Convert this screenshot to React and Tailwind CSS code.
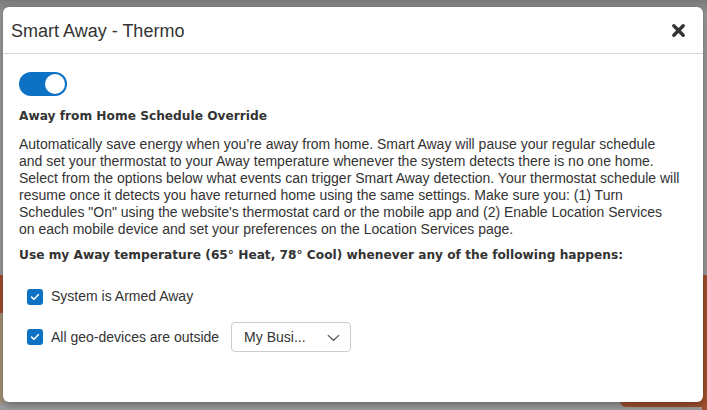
import React from 'react'

const Check = () => (
  <span className="flex items-center justify-center w-4 h-4 rounded-[3px] bg-[#0e72c4] shrink-0">
    <svg viewBox="0 0 16 16" className="w-3 h-3">
      <path d="M3.5 8.2 L6.6 11 L12.5 5" fill="none" stroke="#fff" strokeWidth="2.2" strokeLinecap="round" strokeLinejoin="round" />
    </svg>
  </span>
)

const lines = [
  'Automatically save energy when you’re away from home. Smart Away will pause your regular schedule',
  'and set your thermostat to your Away temperature whenever the system detects there is no one home.',
  'Select from the options below what events can trigger Smart Away detection. Your thermostat schedule will',
  'resume once it detects you have returned home using the same settings. Make sure you: (1) Turn',
  'Schedules "On" using the website\'s thermostat card or the mobile app and (2) Enable Location Services',
  'on each mobile device and set your preferences on the Location Services page.',
]

export default function App() {
  return (
    <div className="relative w-[707px] h-[410px] overflow-hidden bg-[#9c9c9c] font-['Liberation_Sans',Arial,sans-serif]">
      {/* dimmed page behind the modal */}
      <div className="absolute inset-x-0 top-0 h-4 bg-gradient-to-b from-[#7a7a7a] to-[#9c9c9c]" />
      <div className="absolute left-0 top-[275px] w-[4px] h-[38px] bg-[#a4502f]" />
      <div className="absolute left-0 top-[313px] w-[4px] h-[90px] bg-[#a59478]" />
      <div className="absolute right-0 top-[275px] w-[5px] h-[135px] bg-[#a4502f]" />
      <div className="absolute left-[620px] bottom-[3px] w-[87px] h-[10px] bg-[#a4502f] rounded-bl-md" />

      {/* modal */}
      <div className="absolute left-[3px] top-[7px] w-[700px] h-[395px] bg-white rounded-[6px] shadow-[0_3px_9px_rgba(0,0,0,0.35)] flex flex-col">
        <div className="h-[47px] flex items-center justify-between pl-[8px] pr-[17px] border-b border-[#d5d5d5]">
          <h4 className="text-[18px] text-[#333] leading-none mt-[1px]">Smart Away - Thermo</h4>
          <svg viewBox="0 0 16 16" className="w-[15px] h-[15px] mt-[1px]">
            <path d="M3 3 L13 13 M13 3 L3 13" stroke="#333" strokeWidth="3.6" strokeLinecap="round" />
          </svg>
        </div>

        <div className="px-[16px] pt-[18px] text-[14px] text-[#333]">
          <div className="w-[48px] h-[24px] rounded-full bg-[#0e72c4] flex items-center justify-end pr-[2px]">
            <span className="w-[20px] h-[20px] rounded-full bg-white" />
          </div>

          <p className="mt-[12px] font-bold text-[12.2px] leading-[17px] font-['DejaVu_Sans',Verdana,sans-serif]">
            Away from Home Schedule Override
          </p>

          <p className="mt-[11px] leading-[17px] whitespace-nowrap">
            {lines.map((l, i) => (
              <span key={i} className="block">{l}</span>
            ))}
          </p>

          <p className="mt-[9px] font-bold text-[12.2px] leading-[17px] font-['DejaVu_Sans',Verdana,sans-serif]">
            Use my Away temperature (65° Heat, 78° Cool) whenever any of the following happens:
          </p>

          <div className="mt-[22px] pl-[8px] flex items-center gap-[8px]">
            <Check />
            <span>System is Armed Away</span>
          </div>

          <div className="mt-[15px] pl-[8px] flex items-center gap-[8px]">
            <Check />
            <span>All geo-devices are outside</span>
            <div className="ml-[4px] w-[120px] h-[30px] border border-[#ccc] rounded-[4px] flex items-center justify-between pl-[12px] pr-[9px]">
              <span className="text-[#333]">My Busi...</span>
              <svg viewBox="0 0 16 16" className="w-[15px] h-[15px]">
                <path d="M2 5.5 L8 11 L14 5.5" fill="none" stroke="#555" strokeWidth="1.3" />
              </svg>
            </div>
          </div>
        </div>
      </div>
    </div>
  )
}
